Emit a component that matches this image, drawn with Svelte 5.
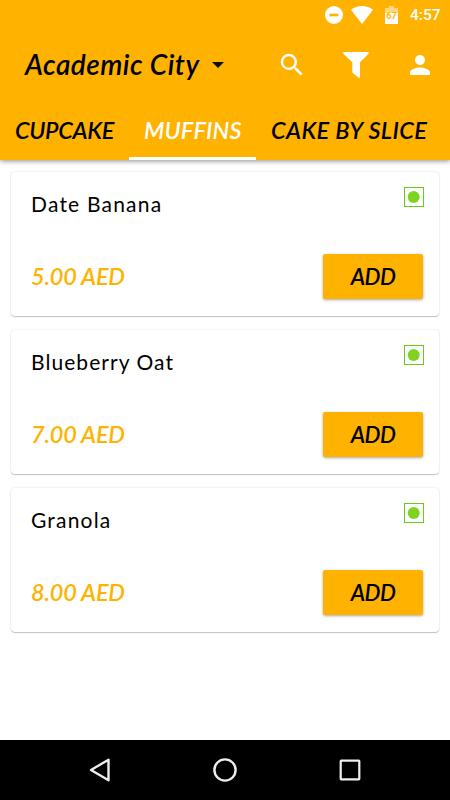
<script lang="ts">
  type Product = { name: string; price: string; slug: string };

  const tabs = [
    { label: 'CUPCAKE', slug: 'cupcake' },
    { label: 'MUFFINS', slug: 'muffins' },
    { label: 'CAKE BY SLICE', slug: 'slice' },
  ];

  const products: Product[] = [
    { name: 'Date Banana', price: '5.00', slug: 'banana' },
    { name: 'Blueberry Oat', price: '7.00', slug: 'blueberry' },
    { name: 'Granola', price: '8.00', slug: 'granola' },
  ];

  let active = $state('muffins');
</script>

<div class="screen">
  <header class="app-bar">
    <div class="status-bar">
      <svg class="dnd" width="18" height="18" viewBox="0 0 18 18">
        <circle cx="9" cy="9" r="9" fill="#fff" />
        <rect x="4.5" y="7.7" width="9" height="2.6" fill="#ffb300" />
      </svg>
      <svg class="wifi" width="22" height="18" viewBox="0 0 22 18">
        <path d="M0 3.7C6.5-1.2 15.5-1.2 22 3.7L11 18z" fill="#fff" />
      </svg>
      <svg class="battery" width="13" height="18" viewBox="0 0 13 18">
        <path d="M4 0h5v2h4v5H0V2h4z" fill="#ffd980" />
        <path d="M0 7h13v11H0z" fill="#fff" />
        <text x="6.5" y="12.5" text-anchor="middle">67</text>
      </svg>
      <span class="clock">4:57</span>
    </div>

    <div class="toolbar">
      <button class="location">
        <span class="location-name">Academic City</span>
        <svg width="12" height="6" viewBox="0 0 12 6"><path d="M0 0h12L6 6z" fill="#111" /></svg>
      </button>
      <button class="action search" aria-label="Search">
        <svg width="30" height="30" viewBox="0 0 24 24">
          <path fill="#fff" d="M15.5 14h-.79l-.28-.27A6.47 6.47 0 0 0 16 9.5 6.5 6.5 0 1 0 9.5 16c1.61 0 3.09-.59 4.23-1.57l.27.28v.79l5 4.99L20.49 19l-4.99-5zm-6 0C7.01 14 5 11.99 5 9.5S7.01 5 9.5 5 14 7.01 14 9.5 11.99 14 9.5 14z" />
        </svg>
      </button>
      <button class="action filter" aria-label="Filter">
        <svg width="26" height="26" viewBox="0 0 26 26">
          <path fill="#fff" d="M1 0h24q1.4.8.3 2L17 10.3V25q-.7 1.2-1.8.3L10 21.2q-.7-.6-.7-1.5v-9.4L.6 2Q-.4.8 1 0z" />
        </svg>
      </button>
      <button class="action profile" aria-label="Profile">
        <svg width="30" height="30" viewBox="0 0 24 24">
          <path fill="#fff" d="M12 12c2.21 0 4-1.79 4-4s-1.79-4-4-4-4 1.79-4 4 1.79 4 4 4zm0 2c-2.67 0-8 1.34-8 4v2h16v-2c0-2.66-5.33-4-8-4z" />
        </svg>
      </button>
    </div>

    <nav class="tabs">
      {#each tabs as tab}
        <button class="tab {tab.slug}" class:active={active === tab.slug} onclick={() => (active = tab.slug)}>
          <span>{tab.label}</span>
        </button>
      {/each}
    </nav>
  </header>

  <main class="product-list">
    {#each products as product}
      <article class="card">
        <div class="card-row">
          <h2 class="name {product.slug}">{product.name}</h2>
          <svg class="veg" width="20" height="20" viewBox="0 0 20 20">
            <rect x="0.5" y="0.5" width="19" height="19" fill="#fff" stroke="#66cc1a" />
            <circle cx="9.7" cy="10" r="6" fill="#7ed321" />
          </svg>
        </div>
        <div class="card-row bottom">
          <span class="price">{product.price} AED</span>
          <button class="add"><span>ADD</span></button>
        </div>
      </article>
    {/each}
  </main>

  <footer class="nav-bar">
    <svg width="24" height="26" viewBox="0 0 24 26">
      <path d="M3 13 20.5 2.7v20.6z" fill="none" stroke="#eee" stroke-width="2.4" stroke-linejoin="round" />
    </svg>
    <svg width="24" height="24" viewBox="0 0 24 24">
      <circle cx="12" cy="12" r="10.6" fill="none" stroke="#eee" stroke-width="2.4" />
    </svg>
    <svg width="24" height="24" viewBox="0 0 24 24">
      <rect x="2.7" y="2.7" width="18.6" height="18.6" rx="0.5" fill="none" stroke="#eee" stroke-width="2.2" />
    </svg>
  </footer>
</div>

<style>
  :global(body) {
    margin: 0;
  }

  .screen {
    display: flex;
    flex-direction: column;
    width: 450px;
    height: 800px;
    overflow: hidden;
    background: #fff;
    font-family: Lato, sans-serif;
    color: #000;
  }

  button {
    padding: 0;
    border: none;
    background: none;
    font: inherit;
    color: inherit;
    cursor: pointer;
  }

  svg {
    display: block;
    flex-shrink: 0;
  }

  .app-bar {
    height: 160px;
    flex-shrink: 0;
    background: #ffb300;
    box-shadow: 0 1px 5px rgba(0, 0, 0, 0.45);
  }

  .status-bar {
    display: flex;
    align-items: center;
    height: 30px;
    padding-left: 325px;
    color: #fff;
  }

  .wifi {
    margin-left: 8px;
  }

  .battery {
    margin-left: 12px;
  }

  .battery text {
    font: bold 9px Roboto, sans-serif;
    fill: #ffb300;
  }

  .clock {
    margin-left: 12px;
    font: 500 15.5px/32px Roboto, sans-serif;
  }

  .toolbar {
    display: flex;
    align-items: center;
    height: 70px;
    padding: 0 15px 0 25px;
    box-sizing: border-box;
  }

  .location {
    display: flex;
    align-items: center;
    width: 252px;
    flex-shrink: 0;
  }

  .location-name {
    width: 187px;
    text-align: left;
    white-space: nowrap;
    font: italic 600 28px/34px Lato, sans-serif;
    letter-spacing: 0.45px;
    padding-bottom: 2px;
  }

  .filter {
    margin-left: 36px;
  }

  .profile {
    margin-left: 36px;
  }

  .tabs {
    display: flex;
    height: 60px;
  }

  .tab {
    width: 129px;
    flex-shrink: 0;
    box-sizing: border-box;
    padding-left: 15px;
    border-bottom: 3px solid transparent;
    text-align: left;
    white-space: nowrap;
    font: italic 600 23.5px/57px Lato, sans-serif;
  }

  .tab span {
    display: block;
    padding-top: 3px;
    line-height: 54px;
  }

  .tab.cupcake {
    letter-spacing: -0.35px;
  }

  .tab.muffins {
    width: 127px;
    letter-spacing: 0.1px;
  }

  .tab.slice {
    width: 194px;
    letter-spacing: 0.35px;
  }

  .tab.active {
    color: #fff;
    border-bottom-color: #fff;
  }

  .product-list {
    display: flex;
    flex-direction: column;
    gap: 14px;
    flex: 1;
    padding: 12px 11px 0;
  }

  .card {
    display: flex;
    flex-direction: column;
    justify-content: space-between;
    height: 144px;
    box-sizing: border-box;
    padding: 15px 15px 17px 20px;
    border-radius: 4px;
    background: #fff;
    box-shadow: 0 0 2px rgba(0, 0, 0, 0.16), 0 1px 1px rgba(0, 0, 0, 0.2);
  }

  .card-row {
    display: flex;
    justify-content: space-between;
    align-items: flex-start;
  }

  .card-row.bottom {
    align-items: center;
    padding-right: 1px;
  }

  .name {
    margin: 2px 0 0;
    font-size: 21px;
    font-weight: 400;
    line-height: 30px;
    letter-spacing: 1.2px;
  }

  .name.blueberry {
    letter-spacing: 1.05px;
  }

  .price {
    color: #ffb300;
    font: italic 600 23.5px/45px Lato, sans-serif;
    letter-spacing: -0.2px;
  }

  .add {
    width: 100px;
    height: 45px;
    border-radius: 2px;
    background: #ffb300;
    box-shadow: 0 1px 3px rgba(0, 0, 0, 0.35);
    font: italic 600 22.5px/44px Lato, sans-serif;
    letter-spacing: -0.6px;
  }

  .nav-bar {
    display: flex;
    align-items: center;
    justify-content: space-between;
    height: 60px;
    flex-shrink: 0;
    box-sizing: border-box;
    padding: 0 88px;
    background: #000;
  }
</style>
